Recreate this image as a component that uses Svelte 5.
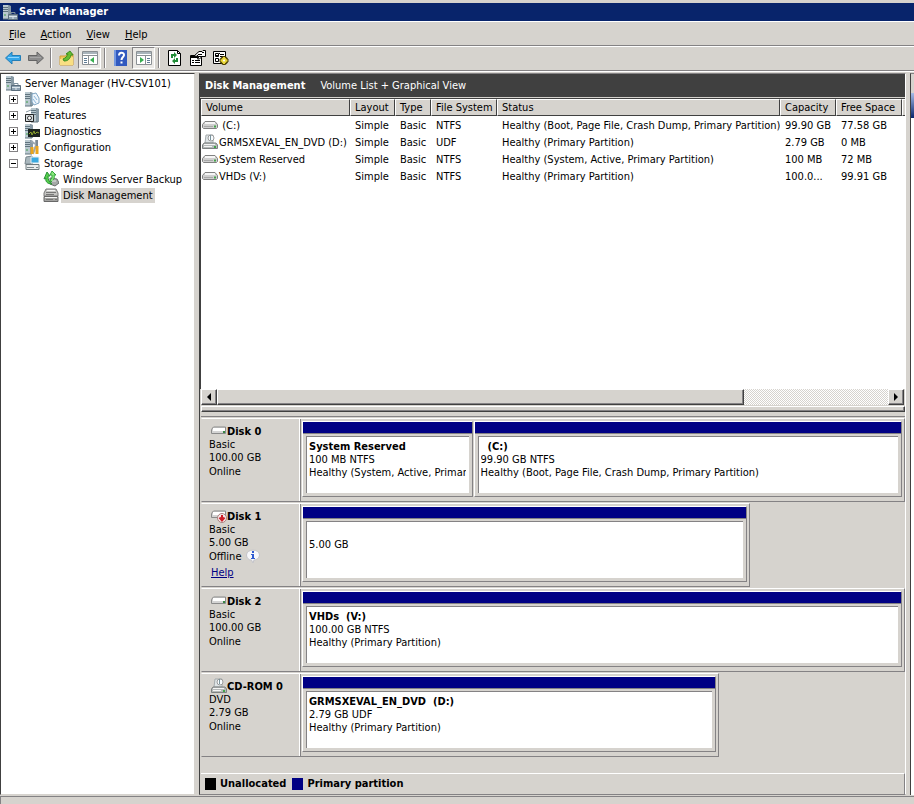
<script lang="ts">
	interface Volume {
		icon: string;
		name: string;
		fs: string;
		status: string;
		capacity: string;
		free: string;
	}

	interface Partition {
		name: string;
		size: string;
		status: string;
		share: number;
	}

	interface Disk {
		icon: string;
		name: string;
		kind: string;
		size: string;
		state: string;
		span: number;
		partitions: Partition[];
	}

	const menus = ['File', 'Action', 'View', 'Help'];

	const nodes = [
		{ icon: 'roles', label: 'Roles' },
		{ icon: 'features', label: 'Features' },
		{ icon: 'diagnostics', label: 'Diagnostics' },
		{ icon: 'configuration', label: 'Configuration' },
		{ icon: 'storage', label: 'Storage', open: true }
	];

	const columns = ['Volume', 'Layout', 'Type', 'File System', 'Status', 'Capacity', 'Free Space', ''];

	const volumes: Volume[] = [
		{ icon: 'drive', name: '\u00a0(C:)', fs: 'NTFS', status: 'Healthy (Boot, Page File, Crash Dump, Primary Partition)', capacity: '99.90 GB', free: '77.58 GB' },
		{ icon: 'dvd', name: 'GRMSXEVAL_EN_DVD (D:)', fs: 'UDF', status: 'Healthy (Primary Partition)', capacity: '2.79 GB', free: '0 MB' },
		{ icon: 'drive', name: 'System Reserved', fs: 'NTFS', status: 'Healthy (System, Active, Primary Partition)', capacity: '100 MB', free: '72 MB' },
		{ icon: 'drive', name: 'VHDs (V:)', fs: 'NTFS', status: 'Healthy (Primary Partition)', capacity: '100.0...', free: '99.91 GB' }
	];

	const disks: Disk[] = [
		{
			icon: 'disk', name: 'Disk 0', kind: 'Basic', size: '100.00 GB', state: 'Online', span: 100,
			partitions: [
				{ name: 'System Reserved', size: '100 MB NTFS', status: 'Healthy (System, Active, Primary Partition)', share: 170 },
				{ name: '\u00a0\u00a0(C:)', size: '99.90 GB NTFS', status: 'Healthy (Boot, Page File, Crash Dump, Primary Partition)', share: 430 }
			]
		},
		{
			icon: 'offline', name: 'Disk 1', kind: 'Basic', size: '5.00 GB', state: 'Offline', span: 78,
			partitions: [{ name: '', size: '5.00 GB', status: '', share: 1 }]
		},
		{
			icon: 'disk', name: 'Disk 2', kind: 'Basic', size: '100.00 GB', state: 'Online', span: 100,
			partitions: [{ name: 'VHDs\u00a0 (V:)', size: '100.00 GB NTFS', status: 'Healthy (Primary Partition)', share: 1 }]
		},
		{
			icon: 'dvd', name: 'CD-ROM 0', kind: 'DVD', size: '2.79 GB', state: 'Online', span: 73.6,
			partitions: [{ name: 'GRMSXEVAL_EN_DVD\u00a0 (D:)', size: '2.79 GB UDF', status: 'Healthy (Primary Partition)', share: 1 }]
		}
	];
</script>

{#snippet tower(x: number)}
	<path d="M{x} 1h6l2 1v13h-8z" fill="#8799a4" />
	<path d="M{x} 1h5v14h-5z" fill="#b9c8cf" />
	<path d="M{x} 3.500h5M{x} 5.500h5M{x} 7.500h5M{x} 15h7" stroke="#61747f" />
	<path d="M{x + 1} 11h2" stroke="#3f9e48" />
{/snippet}

{#snippet icon(name: string)}
	<svg class="icon" width="16" height="16" viewBox="0 0 16 16" fill="none" aria-hidden="true">
		{#if name === 'server'}
			{@render tower(1)}
			<path d="M6.500 10.500h9v5h-9z" fill="#8fa3b3" stroke="#5a6d7c" />
			<path d="M9 10V8.500h4V10" stroke="#7d909e" />
			<path d="M7 12.500h8M11 12v3" stroke="#dce6ec" />
		{:else if name === 'roles'}
			{@render tower(1)}
			<path d="M8 3l4-1 3 5v5l-5 2-2-3z" fill="#eef5fb" stroke="#7fa6c4" />
			<path d="M10 5l3 4M9 8l3 4" stroke="#8db8dc" />
		{:else if name === 'features'}
			{@render tower(7)}
			<path d="M1.500 7.500h8v7h-8z" fill="#d6dde0" stroke="#222" />
			<circle cx="5.500" cy="11" r="2" stroke="#333" fill="#fff" />
			<path d="M2 5l5-2" stroke="#8b9ba5" />
		{:else if name === 'diagnostics'}
			{@render tower(1)}
			<path d="M4 6h12v8H4z" fill="#1c2420" />
			<path d="M5 11l2-2 1 3 2-4 1 3 2-2 2 1" stroke="#8da52e" />
		{:else if name === 'configuration'}
			{@render tower(1)}
			<path d="M7 2l4 3M12 1v5l-3 9" stroke="#9ca8b0" stroke-width="2" />
			<path d="M8 8v7M13 7v8" stroke="#e9a51d" stroke-width="3" />
			<path d="M13 1v6" stroke="#7d8992" stroke-width="2" />
		{:else if name === 'storage'}
			<path d="M2 2l6-1 2 5-2 3H1z" fill="#a9b7bd" stroke="#79878e" />
			<path d="M7 2h8v6H7z" fill="#3ba9df" stroke="#e6edf0" />
			<path d="M2 9.500h13v5H2z" fill="#e9eced" stroke="#6f7a7e" />
			<path d="M3 12.500h7M12 12.500h2" stroke="#7d898d" />
		{:else if name === 'backup'}
			<path d="M7 7l7 1 2 4-4 3-5-2z" fill="#a6a9a8" stroke="#676c69" />
			<path d="M1 8l3-7 3 4H5c0 4 1 6 4 8-5 0-7-3-6-6z" fill="#58cf4e" stroke="#279335" />
			<path d="M8 11c3-2 4-5 3-7h2l-4-4-2 4h2c0 3 0 4-2 5z" fill="#89e77b" stroke="#32a43b" />
			<path d="M9 10h4" stroke="#e3e5e4" />
		{:else if name === 'diskmgmt'}
			<path d="M3 2h10l2 4v3H1V6z" fill="#c5c5c3" stroke="#787878" />
			<path d="M1 9.500h14v5H1z" fill="#a3a3a1" stroke="#686868" />
			<path d="M3 5.500h10M3 7.500h8M3 12.500h7M12 12.500h2" stroke="#777" />
			<path d="M4 3.500h8M2 10.500h12" stroke="#f4f4f4" />
		{:else if name === 'drive'}
			<path d="M3 4.500h10l2.500 3v3l-1 1H1.500l-1-1v-3z" fill="#cfcfcf" stroke="#818181" />
			<path d="M3 6h10" stroke="#f6f6f6" stroke-width="2" />
			<path d="M2 9.500h9" stroke="#a9a9a9" />
			<path d="M12 8.500h2v2h-2z" fill="#43a348" />
		{:else if name === 'dvd'}
			<path d="M4 1h7v8H3z" fill="#dfe5e7" stroke="#a5abad" />
			<circle cx="9" cy="4" r="3" fill="#f8fcff" stroke="#9b9b9b" />
			<path d="M8.500 1v5" stroke="#7a949d" />
			<path d="M2 9h12l1.500 2v3.500H.500V11z" fill="#b5b9b9" stroke="#7e8282" />
			<path d="M2 10.500h11M2 12.500h8" stroke="#f4f4f4" />
			<path d="M12 12h2v2h-2z" fill="#43a348" />
		{:else if name === 'disk'}
			<path d="M1.500 5l1-1h12v6.500h-14V7z" fill="#d4d4d4" stroke="#8b8b8b" />
			<path d="M2 6.500h12" stroke="#fff" stroke-width="3" />
			<path d="M12 9h2" stroke="#398747" stroke-width="2" />
		{:else if name === 'offline'}
			<path d="M1.500 4l1-1h12v6.500h-14V6z" fill="#d4d4d4" stroke="#8b8b8b" />
			<path d="M2 5.500h12" stroke="#fff" stroke-width="3" />
			<circle cx="11" cy="10" r="4.500" fill="#f7e9e9" stroke="#a87f7f" />
			<path d="M11 7v5M8.500 9.500l2.500 3 2.500-3" stroke="#cc1d28" stroke-width="2" />
		{:else if name === 'back'}
			<path d="M.500 8L7 2v3.500h8.500v5H7V14z" fill="#35a6e8" stroke="#247eb7" />
			<path d="M3 7.500h11" stroke="#8fd6ff" />
		{:else if name === 'forward'}
			<path d="M15.500 8L9 2v3.500H.500v5H9V14z" fill="#8c8c8c" stroke="#646464" />
			<path d="M2 7.500h11" stroke="#a6a6a6" />
		{:else if name === 'up'}
			<path d="M1 6h6l1-2h6v11H1z" fill="#f1c95c" stroke="#cf9d36" />
			<path d="M1 9l13-2v8H1z" fill="#f9df82" />
			<path d="M4 9c3-1 4-3 5-5H7l4-3 3 4h-2c-1 4-3 6-7 6z" fill="#67bd31" stroke="#3b8d23" />
		{:else if name === 'tree' || name === 'actions'}
			<path d="M.500 1.500h15v13H.500z" fill="#fff" stroke="#8b9094" />
			<path d="M1 3h14" stroke="#a9b4bb" stroke-width="2" />
			<path d="M.500 5.500h15" stroke="#8b9094" />
			{#if name === 'tree'}
				<path d="M6.500 6v8" stroke="#8b9094" />
				<path d="M2 8.500h3M2 10.500h3M2 12.500h3" stroke="#5e7b94" />
				<path d="M12 7v6l-4-3z" fill="#37ae4f" />
			{:else}
				<path d="M9.500 6v8" stroke="#8b9094" />
				<path d="M11 8.500h3M11 10.500h3M11 12.500h3" stroke="#5e7b94" />
				<path d="M4 7v6l4-3z" fill="#37ae4f" />
			{/if}
		{:else if name === 'help'}
			<path d="M1 0h13v16H1z" fill="#3159bf" />
			<path d="M1 0h2v16H1z" fill="#7397df" />
			<path d="M6 5.500c0-3.500 5-3.500 5-.500 0 2-2.500 2-2.500 5M8.500 11.500v2" stroke="#fff" stroke-width="2" />
		{:else if name === 'refresh'}
			<path d="M1.500.500h9l3 3v12h-12z" fill="#fff" stroke="#000" />
			<path d="M10.500.500v3h3" stroke="#000" />
			<path d="M4 8V4h3V2l3 3-3 3V6H6v2zM11 8v4H8v2l-3-3 3-3v2h1V8z" fill="#218d37" />
		{:else if name === 'properties'}
			<path d="M.500 5.500h11v10H.500z" fill="#fff" stroke="#000" />
			<path d="M1 7h10" stroke="#000" stroke-width="2" />
			<path d="M2 10.500h2M5 10.500h5M2 12.500h2M5 12.500h5" stroke="#000" />
			<path d="M4 6l5-4.500h3l1-1h2.500v6H12L9.500 9H7.500L9 6.500z" fill="#fff" stroke="#000" />
			<path d="M8 4.500h4M9 6.500h3M7 5.500h1M12 2.500h2" stroke="#000" />
		{:else if name === 'settings'}
			<path d="M.500 1.500h12v12H.500z" fill="#fff" stroke="#000" />
			<path d="M2.500 3.500h3v3h-3zM2.500 8.500h3v3h-3z" stroke="#000" />
			<path d="M7 4.500h4M7 6.500h3M3 5l1 1 3-3" stroke="#000" />
			<path d="M11 6v9M6.500 10.500h9M8 7.500l6 6M14 7.500l-6 6" stroke="#4b3e00" stroke-width="3" />
			<path d="M11 7v7M7.500 10.500h7M9 8.500l4 4M13 8.500l-4 4" stroke="#ead738" stroke-width="2" />
			<circle cx="11" cy="10.500" r="1" fill="#fff" />
		{:else if name === 'info'}
			<path d="M1.500 7c0-6.500 13-6.500 13 0 0 3-3 5-5.500 5l-1 3-1.500-3c-3 0-5-2-5-5z" fill="#f7f7fa" stroke="#c4c4ca" />
			<path d="M7 3h2v2H7zM6 6h3v4h1v1H6v-1h1V7H6z" fill="#315bd1" />
		{/if}
	</svg>
{/snippet}

<div class="window">
	<header class="titlebar">
		{@render icon('server')}
		<h1>Server Manager</h1>
	</header>

	<nav class="menubar">
		{#each menus as menu}
			<button><u>{menu[0]}</u>{menu.slice(1)}</button>
		{/each}
	</nav>

	<div class="toolbar" role="toolbar">
		<button aria-label="Back">{@render icon('back')}</button>
		<button aria-label="Forward">{@render icon('forward')}</button>
		<span class="divider"></span>
		<button aria-label="Up">{@render icon('up')}</button>
		<button class="pressed" aria-label="Console tree">{@render icon('tree')}</button>
		<span class="divider"></span>
		<button aria-label="Help topics">{@render icon('help')}</button>
		<button class="pressed" aria-label="Action pane">{@render icon('actions')}</button>
		<span class="divider"></span>
		<button aria-label="Refresh">{@render icon('refresh')}</button>
		<button aria-label="Properties">{@render icon('properties')}</button>
		<button aria-label="Settings">{@render icon('settings')}</button>
	</div>

	<div class="body">
		<aside class="tree">
			<div class="node root">{@render icon('server')}<span>Server Manager (HV-CSV101)</span></div>
			{#each nodes as node}
				<div class="node">
					<button class="toggle" class:open={node.open} aria-label="Toggle {node.label}"></button>
					{@render icon(node.icon)}<span>{node.label}</span>
				</div>
			{/each}
			<div class="node child">{@render icon('backup')}<span>Windows Server Backup</span></div>
			<div class="node child selected">{@render icon('diskmgmt')}<span>Disk Management</span></div>
		</aside>

		<main class="content">
			<div class="heading">
				<h2>Disk Management</h2>
				<span>Volume List + Graphical View</span>
			</div>

			<div class="volumes">
				<table>
					<colgroup>
						<col class="c-volume" /><col class="c-layout" /><col class="c-type" /><col class="c-fs" />
						<col /><col class="c-capacity" /><col class="c-free" /><col class="c-rest" />
					</colgroup>
					<thead>
						<tr>
							{#each columns as column}
								<th>{column}</th>
							{/each}
						</tr>
					</thead>
					<tbody>
						{#each volumes as v}
							<tr>
								<td class="name"><div>{@render icon(v.icon)}<span>{v.name}</span></div></td>
								<td>Simple</td>
								<td>Basic</td>
								<td>{v.fs}</td>
								<td>{v.status}</td>
								<td>{v.capacity}</td>
								<td>{v.free}</td>
								<td></td>
							</tr>
						{/each}
					</tbody>
				</table>
			</div>

			<div class="scrollbar">
				<button class="arrow left" aria-label="Scroll left"></button>
				<div class="track"><div class="thumb"></div></div>
				<button class="arrow right" aria-label="Scroll right"></button>
			</div>
			<div class="splitter"></div>

			<div class="graph">
				{#each disks as disk}
					<section class="disk" style:width="{disk.span}%">
						<div class="info">
							<h3>{@render icon(disk.icon)}<span>{disk.name}</span></h3>
							<p>{disk.kind}</p>
							<p>{disk.size}</p>
							<p class="state">{disk.state}{#if disk.state === 'Offline'}{@render icon('info')}{/if}</p>
							{#if disk.state === 'Offline'}
								<a href="#help">Help</a>
							{/if}
						</div>
						<div class="parts">
							{#each disk.partitions as part}
								<div class="part" style:flex-grow={part.share}>
									<div class="bar"></div>
									<div class="box">
										{#if part.name}<strong>{part.name}</strong>{/if}
										<p>{part.size}</p>
										{#if part.status}<p>{part.status}</p>{/if}
									</div>
								</div>
							{/each}
						</div>
					</section>
				{/each}
			</div>

			<footer class="legend">
				<i class="swatch black"></i><span>Unallocated</span>
				<i class="swatch"></i><span>Primary partition</span>
			</footer>
		</main>

		<aside class="actions"><div class="actions-title"></div><div class="actions-head"></div></aside>
	</div>
	<div class="statusbar"></div>
</div>

<style>
	:global(body) {
		background: #d6d3ce;
	}
	.window {
		display: flex;
		flex-direction: column;
		min-height: 100vh;
		box-sizing: border-box;
		padding-top: 3px;
		background: #d6d3ce;
		color: #000;
		font: 11px/13px Tahoma, "DejaVu Sans Condensed", sans-serif;
		white-space: nowrap;
	}
	.window * {
		box-sizing: border-box;
	}
	h1, h2, h3, p {
		margin: 0;
		font-size: inherit;
	}
	button {
		padding: 0;
		border: none;
		background: none;
		color: inherit;
		font: inherit;
	}
	.icon {
		display: block;
		flex: none;
	}

	.titlebar {
		display: flex;
		align-items: center;
		gap: 1px;
		height: 18px;
		padding: 0 0 1px 2px;
		background: #08246b;
		color: #fff;
	}
	.menubar {
		display: flex;
		gap: 15px;
		height: 25px;
		padding: 2px 9px 0;
		border-top: 1px solid #fff;
		border-bottom: 1px solid #848284;
	}
	.toolbar {
		display: flex;
		align-items: center;
		height: 25px;
		padding: 0 0 1px 1px;
		border-top: 1px solid #fff;
		border-bottom: 1px solid #848284;
	}
	.toolbar button {
		display: grid;
		place-items: center;
		width: 23px;
		height: 22px;
	}
	.toolbar .pressed {
		border: 1px solid;
		border-color: #848284 #fff #fff #848284;
		background: #ebe9e6;
	}
	.divider {
		width: 2px;
		height: 20px;
		margin: 0 3px;
		border-left: 1px solid #848284;
		border-right: 1px solid #fff;
	}

	.body {
		display: flex;
		flex: 1;
		border-top: 1px solid #fff;
		padding-top: 1px;
	}
	.tree {
		flex: none;
		width: 195px;
		padding: 1px 0 0 4px;
		border: 1px solid #d6d3ce;
		border-color: #404040 #d6d3ce #d6d3ce #404040;
		background: #fff;
	}
	.node {
		display: flex;
		align-items: center;
		gap: 2px;
		height: 16px;
		padding-left: 4px;
	}
	.node.root {
		padding-left: 0;
	}
	.node.child {
		padding-left: 38px;
	}
	.node span {
		padding: 1px 2px;
	}
	.selected span {
		background: #d6d3ce;
	}
	.toggle {
		width: 9px;
		height: 9px;
		margin-right: 4px;
		border: 1px solid #848284;
		background:
			linear-gradient(#000, #000) center / 5px 1px no-repeat,
			linear-gradient(#000, #000) center / 1px 5px no-repeat;
	}
	.toggle.open {
		background: linear-gradient(#000, #000) center / 5px 1px no-repeat;
	}

	.content {
		display: flex;
		flex: 1;
		flex-direction: column;
		min-width: 0;
		margin-left: 4px;
		border: 1px solid;
		border-color: #848284 #fff #848284 #404040;
	}
	.heading {
		display: flex;
		align-items: center;
		gap: 15px;
		height: 23px;
		padding-left: 5px;
		background: #404040;
		color: #fff;
	}
	.volumes {
		height: 291px;
		border: 1px solid #404040;
		border-width: 1px 0 0 1px;
		margin-top: 1px;
		background: #fff;
		overflow: hidden;
	}
	table {
		width: 100%;
		border-spacing: 0;
		table-layout: fixed;
	}
	.c-volume { width: 149px; }
	.c-layout { width: 45px; }
	.c-type { width: 36px; }
	.c-fs { width: 66px; }
	.c-capacity { width: 56px; }
	.c-free { width: 66px; }
	.c-rest { width: 3px; }
	th {
		height: 17px;
		padding: 0 4px;
		border: 1px solid;
		border-color: #fff #404040 #404040 #fff;
		background: #d6d3ce;
		font-weight: normal;
		text-align: left;
	}
	th:last-child {
		padding: 0;
		border-right: none;
	}
	td {
		height: 17px;
		padding: 1px 0 0 5px;
		overflow: hidden;
	}
	td:last-child {
		padding: 0;
	}
	td.name {
		padding: 1px 0 0 1px;
	}
	.name div {
		display: flex;
		align-items: center;
		gap: 1px;
	}

	.scrollbar {
		display: flex;
		height: 16px;
		padding: 0 1px;
	}
	.arrow {
		display: grid;
		place-items: center;
		width: 16px;
	}
	.arrow, .thumb {
		border: 1px solid;
		border-color: #fff #404040 #404040 #fff;
		background: #d6d3ce;
		box-shadow: inset -1px -1px #848284;
	}
	.arrow::before {
		content: "";
		border: 4px solid transparent;
	}
	.arrow.left::before {
		border-left-width: 0;
		border-right-color: #000;
	}
	.arrow.right::before {
		border-right-width: 0;
		border-left-color: #000;
	}
	.track {
		flex: 1;
		background: repeating-conic-gradient(#fff 0 25%, #d6d3ce 0 50%) 0 0 / 2px 2px;
	}
	.thumb {
		width: 78.5%;
		height: 16px;
	}
	.splitter {
		height: 6px;
		margin: 1px 0 0 1px;
		border: 1px solid;
		border-color: #fff #404040 #404040 #fff;
		box-shadow: inset -1px -1px #848284;
	}

	.graph {
		flex: 1;
		margin: 4px 0 0 1px;
		padding-top: 1px;
		border-top: 1px solid #848284;
	}
	.disk {
		display: flex;
		height: 84px;
		margin-bottom: 1px;
		border: 1px solid;
		border-color: #fff #848284 #848284 #d6d3ce;
	}
	.info {
		flex: none;
		width: 98px;
		padding: 5px 0 0 7px;
		border-right: 1px solid #fff;
	}
	.info h3 {
		display: flex;
		align-items: center;
		height: 14px;
		padding-left: 2px;
	}
	.state {
		display: flex;
		align-items: center;
		gap: 4px;
		height: 14px;
	}
	.info a {
		display: inline-block;
		margin: 3px 2px;
		color: #000084;
	}
	.parts {
		display: flex;
		flex: 1;
		min-width: 0;
		gap: 1px;
		padding: 2px 2px 4px 1px;
		border-left: 1px solid #848284;
	}
	.part {
		display: flex;
		flex: 1 1 0;
		flex-direction: column;
		min-width: 0;
		border: 1px solid;
		border-color: #fff #848284 #848284 #fff;
	}
	.bar {
		height: 12px;
		border-bottom: 1px solid #848284;
		background: #000084;
	}
	.box {
		flex: 1;
		margin: 2px 3px 3px;
		padding: 3px 3px 0 2px;
		border: 1px solid #848284;
		border-width: 1px 0 0 1px;
		background: #fff;
		overflow: hidden;
	}
	.box p {
		overflow: hidden;
	}
	.box strong {
		display: block;
	}
	.box p:first-child {
		margin-top: 13px;
	}

	.legend {
		display: flex;
		align-items: center;
		gap: 4px;
		height: 21px;
		margin-left: 1px;
		padding: 0 0 1px 4px;
		border-top: 1px solid #fff;
		border-right: 1px solid #848284;
		font-weight: bold;
	}
	.swatch {
		width: 11px;
		height: 12px;
		background: #000084;
	}
	.swatch.black {
		background: #000;
	}
	.legend span + .swatch {
		margin-left: 2px;
	}
	.actions {
		flex: none;
		width: 4px;
		margin-left: 4px;
		border-top: 1px solid #848284;
		border-left: 1px solid #404040;
		background: #fff;
	}
	.actions-title {
		height: 19px;
		background: #d6d3ce;
	}
	.actions-head {
		height: 25px;
		background: linear-gradient(#a5bce8, #08246b);
	}
	.statusbar {
		height: 8px;
		margin-top: 1px;
		border-top: 1px solid #848284;
		border-left: 1px solid #848284;
	}
</style>
